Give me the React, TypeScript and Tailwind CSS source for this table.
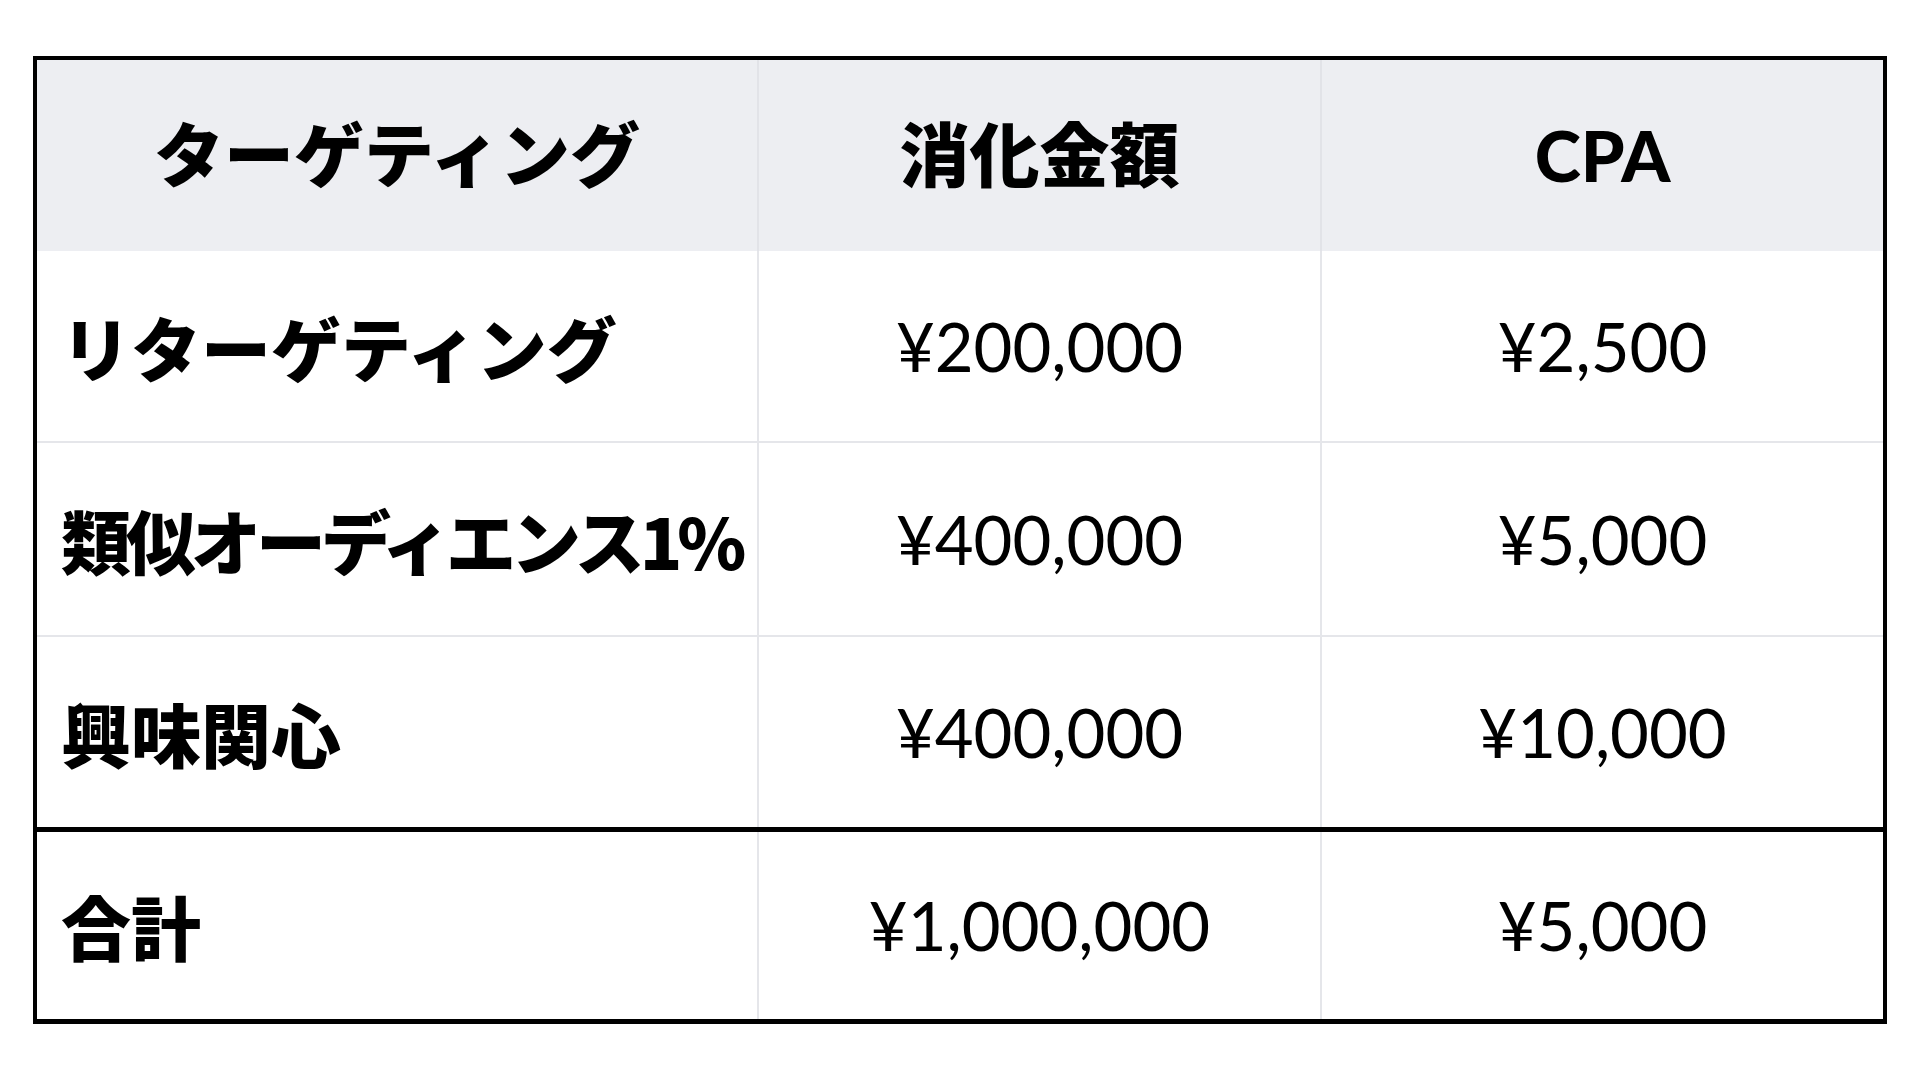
const rows = [
  { name: "リターゲティング", spend: "¥200,000", cpa: "¥2,500", h: "h-[192px] border-b-2 border-[#e5e6ea]", t: "" },
  { name: "類似オーディエンス1%", spend: "¥400,000", cpa: "¥5,000", h: "h-[194px] border-b-2 border-[#e5e6ea]", t: "tracking-[-5px]" },
  { name: "興味関心", spend: "¥400,000", cpa: "¥10,000", h: "h-[195px] border-b-[5px] border-black", t: "" },
  { name: "合計", spend: "¥1,000,000", cpa: "¥5,000", h: "h-[187px]", t: "" },
];

export default function App() {
  return (
    <div
      className="min-h-screen w-full bg-white pl-[33px] pt-[56px] text-black"
      style={{ fontFamily: '"Lato", "Noto Sans CJK JP", sans-serif' }}
    >
      <div className="w-[1854px] border-4 border-b-[5px] border-black">
        <div className="grid h-[191px] grid-cols-[722px_563px_561px] bg-[#edeef2] text-[70px] font-black">
          <div className="flex items-center justify-center border-r-2 border-[#e2e3e8]">ターゲティング</div>
          <div className="flex items-center justify-center border-r-2 border-[#e2e3e8]">消化金額</div>
          <div className="flex items-center justify-center">CPA</div>
        </div>
        {rows.map((r) => (
          <div key={r.name} className={`grid grid-cols-[722px_563px_561px] ${r.h}`}>
            <div
              className={`flex items-center border-r-2 border-[#e5e6ea] pl-[24px] font-['Noto_Sans_CJK_JP',sans-serif] text-[70px] font-black whitespace-nowrap ${r.t}`}
            >
              {r.name}
            </div>
            <div className="flex items-center justify-center border-r-2 border-[#e5e6ea] text-[67px] font-normal">
              {r.spend}
            </div>
            <div className="flex items-center justify-center text-[67px] font-normal">{r.cpa}</div>
          </div>
        ))}
      </div>
    </div>
  );
}
